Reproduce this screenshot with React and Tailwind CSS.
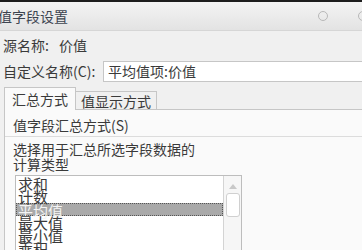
import React from 'react';

const items = ['求和', '计数', '平均值', '最大值', '最小值', '乘积'];

export default function App() {
	return (
		<div className="w-[362px] h-[250px] overflow-hidden bg-[#f0f0f0] text-[#3a3a3a] font-['Noto_Sans_CJK_SC',sans-serif]">
			<div className="h-[2px] bg-[#1e1e1e]" />
			{/* title bar */}
			<div className="h-[29px] flex items-center bg-gradient-to-b from-[#f4f4f4] to-[#e3e3e3] border-b border-[#d6d6d6]">
				<span className="text-[14px] leading-none ml-[-2px] text-[#3c4450]">值字段设置</span>
				<div className="flex-1" />
				<div className="flex items-center gap-[30px] mr-[-6px] shrink-0">
					<span className="w-[10px] h-[10px] rounded-full border border-[#b8b8b8] shrink-0" />
					<span className="w-[10px] h-[10px] rounded-full border border-[#b8b8b8] shrink-0" />
				</div>
			</div>

			<div className="h-[26px] flex items-center pl-[3px] pt-[2px] text-[14px] leading-none">
				<span>源名称:</span>
				<span className="ml-[10px]">价值</span>
			</div>

			<div className="h-[24px] mt-[2px] flex items-center pl-[3px] text-[14px] leading-none">
				<span className="w-[100px] shrink-0">自定义名称(C):</span>
				<div className="flex-1 h-[21px] bg-white border border-[#c6c6c6] flex items-center pl-[4px] border-r-0">平均值项:价值</div>
			</div>

			{/* tabs */}
			<div className="flex items-end h-[22px] mt-[4px] pl-[4px] text-[14px] leading-none">
				<div className="w-[72px] h-[23px] bg-[#fafafa] border border-b-0 border-[#c6c6c6] flex items-center justify-center relative top-[1px]">汇总方式</div>
				<div className="w-[81px] h-[18px] border border-b-0 border-l-0 border-[#c6c6c6] flex items-center justify-center">值显示方式</div>
			</div>

			{/* panel */}
			<div className="ml-[4px] h-[142px] bg-[#fafafa] border-t border-l border-[#c6c6c6]">
				<div className="h-[27px] flex items-center pl-[8px] border-b border-[#dcdcdc] text-[14px] leading-none pt-[3px]">值字段汇总方式(S)</div>
				<div className="pl-[8px] pt-[5px] text-[14px] leading-[15px]">
					<div>选择用于汇总所选字段数据的</div>
					<div>计算类型</div>
				</div>
				<div className="ml-[10px] mt-[3px] w-[227px] h-[80px] bg-white border border-[#bdbdbd] flex">
					<div className="flex-1 pt-[1px]">
						{items.map((t, i) => (
							<div
								key={t}
								className={
									i === 2
										? 'h-[13px] leading-[13px] text-[15px] text-[#f4f4f4] bg-[#a9a9a9] border border-dotted border-[#555] pl-[1px]'
										: 'h-[13px] leading-[13px] text-[15px] pl-[2px] text-[#3a3a3a]'
								}
							>
								{t}
							</div>
						))}
					</div>
					<div className="w-[18px] bg-[#f6f6f6] border-l border-[#d4d4d4] flex flex-col items-center">
						<div className="mt-[8px] w-0 h-0 border-l-[4px] border-r-[4px] border-b-[5px] border-l-transparent border-r-transparent border-b-[#c8c8c8]" />
						<div className="mt-[4px] w-[14px] h-[24px] bg-white border border-[#d0d0d0] rounded-[3px]" />
					</div>
				</div>
			</div>
		</div>
	);
}
